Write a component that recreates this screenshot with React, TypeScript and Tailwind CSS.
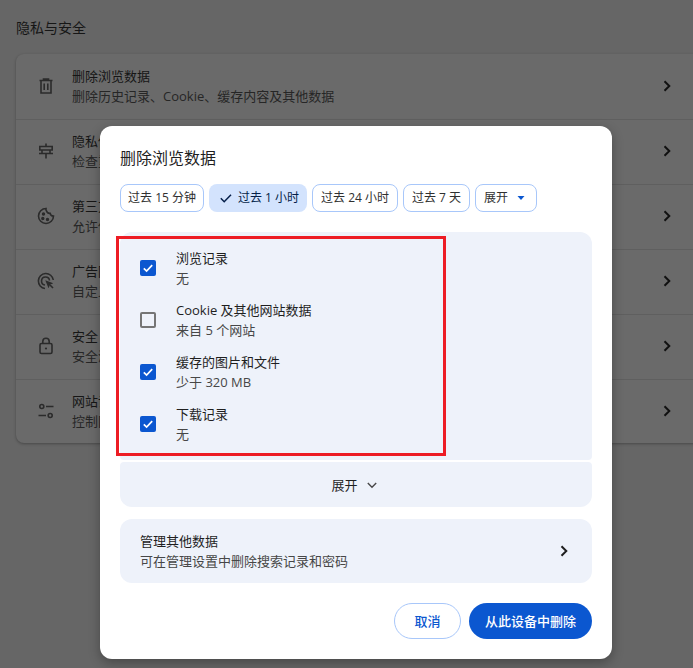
import React from "react";

const F = { fontFamily: '"Open Sans","Noto Sans CJK SC",sans-serif' };

function Chev({ className = "" }: { className?: string }) {
  return (
    <svg width="16" height="16" viewBox="0 0 16 16" className={className} fill="none" stroke="currentColor" strokeWidth="2">
      <path d="M5.500 3.200 10.300 8l-4.800 4.800" />
    </svg>
  );
}

const stroke = { fill: "none", stroke: "#2b2b2b", strokeWidth: 1.6 };

const icons: React.ReactNode[] = [
  <svg width="20" height="20" viewBox="0 0 20 20" {...stroke}>
    <path d="M3.500 4.500h13M7.500 4.500V3h5v1.500M5 4.500V17h10V4.500M8.200 7.500v6.500M11.800 7.500v6.500" />
  </svg>,
  <svg width="20" height="20" viewBox="0 0 20 20" {...stroke}>
    <path d="M10 2.500v3M3.800 9V5.500h12.400V9H3.800ZM3 12.500h14M10 12.500v5" />
    <path d="M6 9v3.500M14 9v3.500" />
  </svg>,
  <svg width="20" height="20" viewBox="0 0 20 20" {...stroke}>
    <path d="M10 2.500a7.500 7.500 0 1 0 7.500 7.500 3.200 3.200 0 0 1-3.300-2.700A3.500 3.500 0 0 1 10.500 5 3 3 0 0 1 10 2.500Z" />
    <circle cx="7.500" cy="8" r=".9" fill="#2b2b2b" />
    <circle cx="6.800" cy="12.500" r=".9" fill="#2b2b2b" />
    <circle cx="11.500" cy="13.500" r=".9" fill="#2b2b2b" />
  </svg>,
  <svg width="20" height="20" viewBox="0 0 20 20" {...stroke}>
    <path d="M9 17.500A7.500 7.500 0 1 1 17.300 9" />
    <path d="M9 14a4 4 0 1 1 4.500-4.500" />
    <path d="M9.300 9.300l8 3-3.300 1.500-1.500 3.500-3.200-8Z" fill="#2b2b2b" stroke="none" />
    <path d="M14 14l3 3" />
  </svg>,
  <svg width="20" height="20" viewBox="0 0 20 20" {...stroke}>
    <rect x="4" y="7.500" width="12" height="10" rx="1.500" />
    <path d="M6.800 7.500V5.500a3.200 3.200 0 0 1 6.400 0v2" />
    <circle cx="10" cy="12.500" r="1.100" fill="#2b2b2b" stroke="none" />
  </svg>,
  <svg width="20" height="20" viewBox="0 0 20 20" {...stroke}>
    <circle cx="5.800" cy="5.500" r="2" />
    <path d="M10 5.500h7.500M2.500 14.500H10" />
    <circle cx="14.200" cy="14.500" r="2" />
  </svg>,
];

const rows = [
  ["删除浏览数据", "删除历史记录、Cookie、缓存内容及其他数据"],
  ["隐私保护指南", "检查重要的隐私和安全控件"],
  ["第三方 Cookie", "允许使用第三方 Cookie"],
  ["广告隐私设置", "自定义用于向您展示广告的信息"],
  ["安全", "安全浏览和其他安全设置"],
  ["网站设置", "控制网站可以使用和显示的信息"],
];

const chips: [string, string][] = [
  ["过去 15 分钟", "w-[84px]"],
  ["过去 1 小时", "w-[98px]"],
  ["过去 24 小时", "w-[86px]"],
  ["过去 7 天", "w-[67px]"],
];

const items: [string, string, boolean][] = [
  ["浏览记录", "无", true],
  ["Cookie 及其他网站数据", "来自 5 个网站", false],
  ["缓存的图片和文件", "少于 320 MB", true],
  ["下载记录", "无", true],
];

function Check({ on }: { on: boolean }) {
  if (!on) return <span className="w-4 h-4 rounded-[2px] border-2 border-[#757575] box-border shrink-0" />;
  return (
    <span className="w-4 h-4 rounded-[2px] bg-[#0b57d0] flex items-center justify-center shrink-0">
      <svg width="12" height="12" viewBox="0 0 12 12" fill="none" stroke="#fff" strokeWidth="1.700">
        <path d="M1.800 6.300 4.600 9l5.600-5.800" />
      </svg>
    </span>
  );
}

export default function App() {
  return (
    <div style={F} className="relative w-[693px] h-[668px] overflow-hidden bg-[#666666] text-[13px] leading-5">
      <div className="pt-[18px] pl-4">
        <div className="text-[14px] leading-5 text-[#161616]">隐私与安全</div>
        <div className="mt-4 rounded-lg bg-[#6a6a6a] shadow-[0_1px_3px_rgba(0,0,0,0.3)] h-[389px] flex flex-col overflow-hidden w-[700px]">
          {rows.map((r, i) => (
            <div key={i} className={"h-[65px] shrink-0 flex items-center pl-5 pb-[2px] " + (i ? "border-t border-[#5f5f5f]" : "")}>
              <span className="w-5 h-5 mr-[16px] flex">{icons[i]}</span>
              <div className="flex-1 text-[#161616]">
                <div>{r[0]}</div>
                <div className="text-[#262626]">{r[1]}</div>
              </div>
              <Chev className="text-[#111] mr-[41px]" />
            </div>
          ))}
        </div>
      </div>

      <div className="absolute left-[100px] top-[126px] w-[512px] h-[533px] bg-white rounded-xl p-5 flex flex-col shadow-[0_4px_12px_rgba(0,0,0,0.3)]">
        <div className="text-[16px] leading-6 text-[#1f1f1f]">删除浏览数据</div>
        <div className="flex gap-[5px] mt-[14px] text-[12px]">
          {chips.map(([c, w], i) =>
            i === 1 ? (
              <div key={c} className={w + " h-7 pl-[11px] rounded-lg bg-[#d3e3fd] text-[#041e49] flex items-center gap-[6px]"}>
                <svg width="12" height="12" viewBox="0 0 12 12" fill="none" stroke="#041e49" strokeWidth="1.500">
                  <path d="M.8 6.300 4.200 9.700 11 2.800" />
                </svg>
                {c}
              </div>
            ) : (
              <div key={c} className={w + " h-7 rounded-lg border border-[#a8c7fa] text-[#303030] flex items-center justify-center"}>{c}</div>
            )
          )}
          <div className="h-7 w-[62px] pl-2 rounded-lg border border-[#a8c7fa] text-[#303030] flex items-center">
            展开
            <svg width="10" height="5" viewBox="0 0 10 5" className="ml-[8px]"><path d="M1.500 0h7L5 4Z" fill="#0b57d0" /></svg>
          </div>
        </div>
        <div className="mt-5 h-[228px] bg-[#eef2fa] rounded-t-xl rounded-b-[4px] pt-[10px] pl-5">
          {items.map(([t, s, on]) => (
            <div key={t} className="h-[52px] flex items-center gap-5">
              <Check on={on} />
              <div className="pb-[1px]">
                <div className="text-[#1f1f1f]">{t}</div>
                <div className="text-[#474747]">{s}</div>
              </div>
            </div>
          ))}
        </div>
        <div className="mt-[2px] h-[45px] pr-[2px] bg-[#eef2fa] rounded-t-[4px] rounded-b-xl flex items-center justify-center gap-[7px] text-[#1f1f1f]">
          展开
          <svg width="14" height="14" viewBox="0 0 14 14" fill="none" stroke="#474747" strokeWidth="1.400">
            <path d="M2.800 5 7 9.200 11.200 5" />
          </svg>
        </div>
        <div className="mt-3 h-16 bg-[#eef2fa] rounded-xl flex items-center pl-5 pr-5">
          <div className="flex-1">
            <div className="text-[#1f1f1f]">管理其他数据</div>
            <div className="text-[#474747]">可在管理设置中删除搜索记录和密码</div>
          </div>
          <Chev className="text-[#1f1f1f]" />
        </div>
        <div className="mt-5 flex justify-end gap-2">
          <div className="w-[67px] h-9 rounded-full border border-[#a8c7fa] text-[#0b57d0] flex items-center justify-center font-medium">取消</div>
          <div className="w-[123px] h-9 rounded-full bg-[#0b57d0] text-white flex items-center justify-center font-medium">从此设备中删除</div>
        </div>
      </div>

      <div className="absolute left-[116px] top-[236px] w-[330px] h-[220px] border-[3px] border-[#ed1c24] pointer-events-none" />
    </div>
  );
}
